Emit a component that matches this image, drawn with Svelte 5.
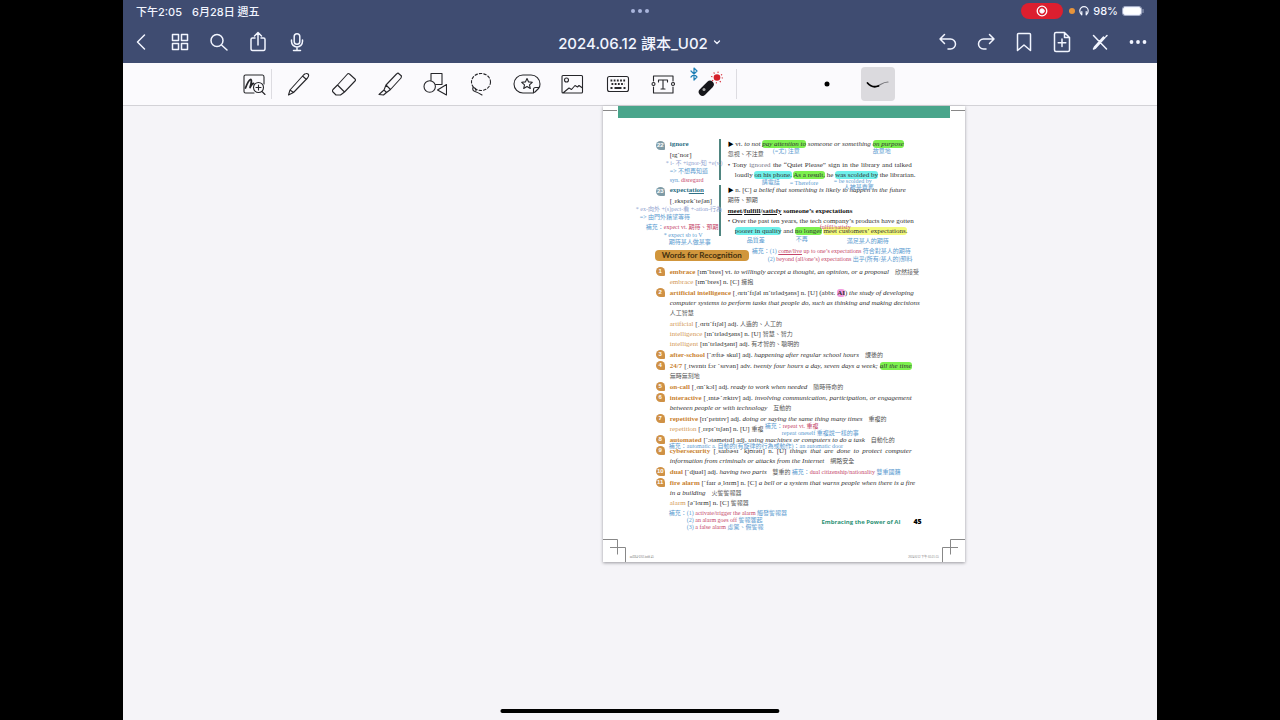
<script>
  const navLeft = [
    { label: "Back", d: "M15.5 5 8.5 12l7 7" },
    { label: "Thumbnails", d: "M4.5 4.5h6v6h-6zM13.5 4.5h6v6h-6zM4.5 13.5h6v6h-6zM13.5 13.5h6v6h-6z" },
    { label: "Search", d: "M4 10.500a6 6 0 1 0 12 0a6 6 0 1 0-12 0M14.500 15l5.500 5" },
    { label: "Share", d: "M9 8H6.500Q5 8 5 9.500v9Q5 20.500 6.500 20.500h11Q19 20.500 19 18.500v-9Q19 8 17.500 8H15M12 15V2.500M8.500 6 12 2.500 15.500 6" },
    { label: "Record audio", d: "M9.200 6.500a2.800 2.800 0 0 1 5.600 0v5a2.800 2.800 0 0 1-5.600 0zM6.500 10v1.500a5.500 5.500 0 0 0 11 0V10M12 17v3.500M8.500 20.500h7" },
  ];
  const navRight = [
    { label: "Undo", d: "M8.500 4.500 4 9l4.500 4.500M4 9h10.500a5 5 0 0 1 0 10H12" },
    { label: "Redo", d: "M15.500 4.500 20 9l-4.500 4.500M20 9H9.500a5 5 0 0 0 0 10H12" },
    { label: "Bookmark", d: "M5.500 4.500Q5.500 3.500 6.500 3.500h11Q18.500 3.500 18.500 4.500v16L12 15l-6.500 5.500z" },
    { label: "Add page", d: "M14.500 2.500H6Q4.500 2.500 4.500 4v16Q4.500 21.500 6 21.500h12Q19.500 21.500 19.500 20V7.500zM14.500 2.500v5h5M12 9v7.500M8.200 12.700h7.600" },
    { label: "Read only", d: "M5.500 5.500 18.500 19M5.500 19l2-1 9.500-10.500M18 6.500l1-1M5.500 19l1-2 9-10" },
    { label: "More", dots: true },
  ];
  const tools = [
    { label: "Pen", d: "M1.500 23l1.500-5L16.500 3q3-2.500 4.500-1t-.500 4L6.500 20.500zM15.500 4l4 3.500M11.500 8.500l6-6.500M3 18l3.500 2.500" },
    { label: "Eraser", d: "M5.500 13 15.500 2Q16.500 1 17.500 2l5.500 5Q24 8 23 9L12.500 20zM5.500 13 1 17.500q-1 1.500 0 2.500l3 3h4.500L12.500 20" },
    { label: "Highlighter", d: "M8 13 18.500 2 20 1l3.500 3-.500 2L12.500 17.500zM8 13l-2 5 2.500 2.500 4-3M6 18l-5 4.500 4.500.500 3-2.500" },
    { label: "Shapes", d: "M8 9V1.500h11v11h-6M1 14.500a5.700 5.700 0 1 0 11.400 0a5.700 5.700 0 1 0-11.400 0M23.500 12.500v10.500L14.500 18z" },
    { label: "Lasso", lasso: true },
    { label: "Elements", wide: true, d: "M10 3h8a9 9 0 0 1 9 9q0 3-1.500 4.500L22 20q-1.500 1-4 1h-8a9 9 0 0 1 0-18M26 15.500h-3.500q-2 0-2 2v3.500M14 6.500l1.600 3.400 3.700.400-2.800 2.500.800 3.700-3.300-1.900-3.300 1.900.800-3.700-2.800-2.500 3.700-.400z" },
    { label: "Image", d: "M2 4.500Q2 3.500 3 3.500h18.500Q22.500 3.500 22.500 4.500v15.500Q22.500 21 21.500 21H3Q2 21 2 20zM4.500 8a2 2 0 1 0 4 0a2 2 0 1 0-4 0M3 21l6-5 2.500 1.500 3.500-4 2.500 1.500 1.500-1.500 3.500 2.500" },
    { label: "Keyboard", keyboard: true },
    { label: "Text", d: "M2.500 9V4h19.500v5M2.500 15v6h19.500v-6M7.500 10V8h9v2M12 8v9M10 17h4M1 12a1.500 1.500 0 1 0 3 0a1.500 1.500 0 1 0-3 0M20.500 12a1.500 1.500 0 1 0 3 0a1.500 1.500 0 1 0-3 0" },
    { label: "Laser pointer", laser: true },
  ];

  // each line is a list of [text, classes] runs; full lines are justified
  const words = [
    {
      no: 22, word: [["ignore", ""]], ipa: "[ɪgˋnor]",
      lines: [
        { runs: [["▶ ", "tri"], ["vt. ", ""], ["to not ", "i"], ["pay attention to", "i green"], [" someone or something ", "i"], ["on purpose", "i green"]] },
        { zh: true, runs: [["忽視、不注意", "zh"]] },
        { full: true, runs: [["• Tony ", ""], ["ignored", "dim"], [" the “Quiet Please” sign in the library and talked", ""]] },
        { indent: true, full: true, runs: [["loudly ", ""], ["on his phone.", "cyan"], [" ", ""], ["As a result,", "green"], [" he ", ""], ["was scolded by", "cyan"], [" the librarian.", ""]] },
      ],
    },
    {
      no: 23, word: [["expect", ""], ["ation", "u"]], ipa: "[͵ɛkspɛkˋteʃən]",
      lines: [
        { runs: [["▶ ", "tri"], ["n. [C] ", ""], ["a belief that something is likely to happen in the future", "i"]] },
        { zh: true, runs: [["期待、預期", "zh"]] },
        { runs: [["meet", "b u"], ["/", "b"], ["fulfill", "b u"], ["/", "b"], ["satisfy", "b u"], [" someone’s expectations", "b"]] },
        { full: true, runs: [["• Over the past ten years, the tech company’s products have gotten", ""]] },
        { indent: true, runs: [["poorer in quality", "cyan"], [" and ", ""], ["no longer", "green"], [" ", ""], ["meet customers’ expectations.", "yellow"]] },
      ],
    },
  ];

  const entries = [
    {
      lines: [{ runs: [["embrace", "w"], [" [ɪmˋbres] vt. ", ""], ["to willingly accept a thought, an opinion, or a proposal", "i"], ["　欣然接受", "zh"]] }],
      sub: [[["embrace", "s"], [" [ɪmˋbres] n. [C] ", ""], ["擁抱", "zh"]]],
    },
    {
      lines: [
        { full: true, runs: [["artificial intelligence", "w"], [" [͵ɑrtɪˋfɪʃəl ɪnˋtɛlədʒəns] n. [U] (abbr. ", ""], ["AI", "pink"], [") ", ""], ["the study of developing", "i"]] },
        { full: true, runs: [["computer systems to perform tasks that people do, such as thinking and making decisions", "i"]] },
        { zh: true, runs: [["人工智慧", "zh"]] },
      ],
      sub: [
        [["artificial", "s"], [" [͵ɑrtɪˋfɪʃəl] adj. ", ""], ["人造的、人工的", "zh"]],
        [["intelligence", "s"], [" [ɪnˋtɛlədʒəns] n. [U] ", ""], ["智慧、智力", "zh"]],
        [["intelligent", "s"], [" [ɪnˋtɛlədʒənt] adj. ", ""], ["有才智的、聰明的", "zh"]],
      ],
    },
    { lines: [{ runs: [["after-school", "w"], [" [ˋæftɚ skul] adj. ", ""], ["happening after regular school hours", "i"], ["　課後的", "zh"]] }] },
    {
      lines: [
        { full: true, runs: [["24/7", "w"], [" [͵twɛntɪ fɔr ˋsɛvən] adv. ", ""], ["twenty four hours a day, seven days a week; ", "i"], ["all the time", "i green"]] },
        { runs: [["無時無刻地", "zh"]] },
      ],
    },
    { lines: [{ runs: [["on-call", "w"], [" [͵ɑnˋkɔl] adj. ", ""], ["ready to work when needed", "i"], ["　隨時待命的", "zh"]] }] },
    {
      lines: [
        { full: true, runs: [["interactive", "w"], [" [͵ɪntɚˋæktɪv] adj. ", ""], ["involving communication, participation, or engagement", "i"]] },
        { runs: [["between people or with technology", "i"], ["　互動的", "zh"]] },
      ],
    },
    {
      lines: [{ runs: [["repetitive", "w"], [" [rɪˋpɛtɪtɪv] adj. ", ""], ["doing or saying the same thing many times", "i"], ["　重複的", "zh"]] }],
      sub: [[["repetition", "s"], [" [͵rɛpɪˋtɪʃən] n. [U] ", ""], ["重複", "zh"]]],
    },
    { lines: [{ runs: [["automated", "w"], [" [ˋɔtəmetɪd] adj. ", ""], ["using machines or computers to do a task", "i"], ["　自動化的", "zh"]] }] },
    {
      lines: [
        { full: true, runs: [["cybersecurity", "w"], [" [͵saɪbɚsɪˋkjʊrətɪ] n. [U] ", ""], ["things that are done to protect computer", "i"]] },
        { runs: [["information from criminals or attacks from the Internet", "i"], ["　網路安全", "zh"]] },
      ],
    },
    { lines: [{ runs: [["dual", "w"], [" [ˋdjuəl] adj. ", ""], ["having two parts", "i"], ["　雙重的", "zh"]] }] },
    {
      lines: [
        { full: true, runs: [["fire alarm", "w"], [" [ˋfaɪr ə͵lɑrm] n. [C] ", ""], ["a bell or a system that warns people when there is a fire", "i"]] },
        { runs: [["in a building", "i"], ["　火警警報器", "zh"]] },
      ],
      sub: [[["alarm", "s"], [" [əˋlɑrm] n. [C] ", ""], ["警報器", "zh"]]],
    },
  ];

  // handwritten notes pinned on the page: x, y from its top left corner
  const notes = [
    { x: 170, y: 41, runs: [["(=尤) 注意", ""]] },
    { x: 270, y: 41, runs: [["故意地", ""]] },
    { x: 63, y: 53, runs: [["* i- 不 +ignor-知 +e(v.)", "faint"]] },
    { x: 67, y: 61, runs: [["=> 不想再知道", ""]] },
    { x: 67, y: 70, runs: [["syn. ", ""], ["disregard", "red"]] },
    { x: 159, y: 72, runs: [["講電話", ""]] },
    { x: 187, y: 73, runs: [["= Therefore", ""]] },
    { x: 231, y: 71, runs: [["= be scolded by", ""]] },
    { x: 241, y: 77, runs: [["人被某責罵", ""]] },
    { x: 33, y: 99, runs: [["* ex-向外 +(s)pect-看 +-ation-行為", "faint"]] },
    { x: 37, y: 107, runs: [["=> 由門外藉望等待", ""]] },
    { x: 43, y: 117, runs: [["補充：", ""], ["expect vt. 期待、預期", "red"]] },
    { x: 61, y: 125, runs: [["* expect sb to V", ""]] },
    { x: 66, y: 132, runs: [["期待某人做某事", ""]] },
    { x: 217, y: 117, runs: [["fulfill/satisfy", "red"]] },
    { x: 144, y: 130, runs: [["品質差", ""]] },
    { x: 193, y: 129, runs: [["不再", ""]] },
    { x: 244, y: 131, runs: [["滿足某人的期待", ""]] },
    { x: 149, y: 141, runs: [["補充：(1) ", ""], ["come/live", "red u"], [" up to one’s expectations ", "red"], ["符合對某人的期待", ""]] },
    { x: 165, y: 149, runs: [["(2) ", ""], ["beyond (all/one’s) expectations ", "red"], ["出乎(所有/某人的)預料", ""]] },
    { x: 162, y: 316, runs: [["補充：", ""], ["repeat vt. 重複", "red"]] },
    { x: 179, y: 323, runs: [["repeat oneself 重複說一樣的事", ""]] },
    { x: 66, y: 336, runs: [["補充：automatic a. 自動的(有旋律的行為或動作)：an automatic door", ""]] },
    { x: 189, y: 362, runs: [["補充：", ""], ["dual citizenship/nationality ", "red"], ["雙重國籍", ""]] },
    { x: 66, y: 403, runs: [["補充：(1) ", ""], ["activate/trigger the alarm ", "red"], ["觸發警報器", ""]] },
    { x: 84, y: 410, runs: [["(2) ", ""], ["an alarm goes off ", "red"], ["警報響起", ""]] },
    { x: 84, y: 417, runs: [["(3) ", ""], ["a false alarm ", "red"], ["虛驚、假警報", ""]] },
  ];

  let pen = $state("curve");
</script>

{#snippet text(runs)}{#each runs as [t, c]}<span class={c}>{t}</span>{/each}{/snippet}

{#snippet navButton(item)}
  <button type="button" class="nav-btn" aria-label={item.label}>
    <svg viewBox="0 0 24 24">
      {#if item.dots}
        <g fill="currentColor" stroke="none"><circle cx="5.500" cy="12" r="1.900" /><circle cx="12" cy="12" r="1.900" /><circle cx="18.500" cy="12" r="1.900" /></g>
      {:else}
        <path d={item.d} />
      {/if}
    </svg>
  </button>
{/snippet}

<div class="device">
  <header>
    <div class="status">
      <span class="clock"><span>下午2:05</span><span>6月28日 週五</span></span>
      <span class="grip"><i></i><i></i><i></i></span>
      <span class="system">
        <span class="rec">
          <svg viewBox="0 0 12 12"><circle cx="6" cy="6" r="4.800" fill="none" stroke="#fff" stroke-width="1.300" /><circle cx="6" cy="6" r="2.200" fill="#fff" /></svg>
        </span>
        <i class="mic-dot"></i>
        <svg class="phones" viewBox="0 0 10 10"><path d="M2.500 8.500Q.800 7 .800 4.800a4.200 4.200 0 0 1 8.400 0Q9.200 7 7.500 8.500M2.800 5.500v3.300M7.200 5.500v3.300" /></svg>
        <span>98%</span>
        <svg class="battery" viewBox="0 0 22 10"><rect x=".500" y=".500" width="19" height="9" rx="2.500" fill="none" stroke="#a3abc4" /><rect x="1.500" y="1.500" width="17" height="7" rx="1.500" fill="#fff" /><path d="M21 3.500v3" stroke="#a3abc4" /></svg>
      </span>
    </div>
    <nav>
      <div class="group">
        {#each navLeft as item}{@render navButton(item)}{/each}
      </div>
      <button type="button" class="title">
        2024.06.12 課本_U02
        <svg viewBox="0 0 8 8"><path d="M1.500 3 4 5.500 6.500 3" /></svg>
      </button>
      <div class="group right">
        {#each navRight as item}{@render navButton(item)}{/each}
      </div>
    </nav>
  </header>

  <div class="toolbar" role="toolbar" aria-label="Tools">
    <button type="button" class="tool" aria-label="Zoom window">
      <svg viewBox="0 0 24 24">
        <path d="M22 12V5Q22 3 20.500 3H3.500Q2 3 2 4.500v15Q2 21 3.500 21H12" />
        <path d="M3.500 16q3-8 5-8.500 2 0-.500 8 2-4 3.500-4" stroke-width="1.800" />
        <path d="M11.500 15.500a5 5 0 1 0 10 0a5 5 0 1 0-10 0M20 19.500l3 3M16.500 13v5M14 15.500h5" />
      </svg>
    </button>
    <span class="divider"></span>
    <div class="tools">
      {#each tools as tool}
        <button type="button" class="tool" aria-label={tool.label}>
          {#if tool.laser}
            <svg class="laser" viewBox="0 0 34 34">
              <path d="M-1 4l6 6-3 3V1l3 3-6 6" stroke="#1f7fb5" stroke-width="1.200" />
              <path d="M10.500 25 18 17.500" stroke="#16161a" stroke-width="7.500" />
              <circle cx="12" cy="22.500" r="1.500" fill="#aaa" stroke="none" />
              <circle cx="25" cy="10.500" r="3.300" fill="#d5202b" stroke="none" />
              <circle cx="25" cy="10.500" r="5.300" fill="none" stroke="#d5202b" stroke-width="1.300" stroke-dasharray="1 3.160" stroke-linecap="butt" />
            </svg>
          {:else if tool.wide}
            <svg class="wide" viewBox="0 0 28 24"><path d={tool.d} /></svg>
          {:else}
            <svg viewBox="0 0 24 24">
              {#if tool.lasso}
                <ellipse cx="12" cy="10" rx="9.500" ry="8.500" stroke-dasharray="2.500 2" />
                <path d="M4 15.500q-1 3 2 4t7 3.500M4 15.500q3 0 3 3" />
              {:else if tool.keyboard}
                <rect x="1.500" y="4.500" width="21" height="15" rx="2" />
                <path d="M4.500 8.500h15M5.500 12h13" stroke-width="2.200" stroke-dasharray="1.800 1.400" stroke-linecap="butt" />
                <path d="M4.500 16h2M8.500 16h7M17.500 16h2" stroke-width="2" stroke-linecap="butt" />
              {:else}
                <path d={tool.d} />
              {/if}
            </svg>
          {/if}
        </button>
      {/each}
    </div>
    <span class="divider"></span>
    <div class="pens">
      <button type="button" class="tool" class:selected={pen === "dot"} aria-label="Dot" onclick={() => (pen = "dot")}>
        <svg viewBox="0 0 24 24"><circle cx="12" cy="12" r="2.500" fill="#000" stroke="none" /></svg>
      </button>
      <button type="button" class="tool" class:selected={pen === "curve"} aria-label="Curve" onclick={() => (pen = "curve")}>
        <svg viewBox="0 0 24 24">
          <path d="M10 14.500c4-.500 6-4.500 12-4.500" stroke="#77777b" stroke-width="1.200" />
          <path d="M1.500 11c3 3.500 7 4.500 11 3" stroke="#000" stroke-width="1.800" />
        </svg>
      </button>
    </div>
  </div>

  <main>
    <article>
      <svg class="marks top-left" viewBox="0 0 24 24"><path d="M0 4.500h14" /></svg>
      <svg class="marks top-right" viewBox="0 0 24 24"><path d="M10 4.500h14" /></svg>
      <div class="band"></div>

      {#each words as w}
        <section class="word">
          <span class="no grey">{w.no}</span>
          <div>
            <h3>{@render text(w.word)}</h3>
            <p class="ipa">{w.ipa}</p>
          </div>
          <div class="meaning">
            {#each w.lines as line}
              <p class:full={line.full} class:zh-line={line.zh} class:indent={line.indent}>{@render text(line.runs)}</p>
            {/each}
          </div>
        </section>
      {/each}

      <h2>Words for Recognition</h2>

      <ol>
        {#each entries as entry, i}
          <li class="entry">
            <span class="no">{i + 1}</span>
            <div>
              {#each entry.lines as line}
                <p class:full={line.full} class:zh-line={line.zh}>{@render text(line.runs)}</p>
              {/each}
              {#each entry.sub ?? [] as runs}
                <p>{@render text(runs)}</p>
              {/each}
            </div>
          </li>
        {/each}
      </ol>

      <footer><span>Embracing the Power of AI</span><b>45</b></footer>
      <div class="slug"><span>aaEB4-U02.indd  45</span><span>2024/6/12  下午 03:21:55</span></div>

      {#each notes as note}
        <span class="note" style="left: {note.x}px; top: {note.y}px">{@render text(note.runs)}</span>
      {/each}

      <svg class="marks bottom-left" viewBox="0 0 24 24"><path d="M0 1.500h14.500v15M7 9.500h15.500V24" /></svg>
      <svg class="marks bottom-right" viewBox="0 0 24 24"><path d="M24 1.500H9.500v15M17 9.500H1.500V24" /></svg>
    </article>
    <div class="home"></div>
  </main>
</div>

<style>
  :global(body) {
    background: #000;
  }
  .device {
    height: 100vh;
    aspect-ratio: 1034 / 720;
    max-width: 100%;
    margin: 0 auto;
    display: flex;
    flex-direction: column;
    overflow: hidden;
    font-family: Inter, "Noto Sans CJK TC", sans-serif;
    background: #f5f4f8;
  }
  button {
    border: 0;
    padding: 0;
    background: none;
    color: inherit;
    font: inherit;
    cursor: pointer;
  }
  svg {
    fill: none;
    stroke: currentColor;
    stroke-linecap: round;
    stroke-linejoin: round;
    display: block;
  }
  h2, h3, p, ol {
    margin: 0;
    padding: 0;
    font-weight: inherit;
    font-size: inherit;
  }
  header {
    background: #3f4c71;
    color: #f2f5ff;
    flex: none;
  }
  .status {
    display: grid;
    grid-template-columns: 1fr auto 1fr;
    align-items: center;
    height: 21px;
    padding: 0 13px;
    font-size: 11px;
    font-weight: 500;
  }
  .clock {
    display: flex;
    gap: 10px;
  }
  .grip {
    display: flex;
    gap: 3px;
  }
  .grip i {
    width: 4px;
    height: 4px;
    border-radius: 50%;
    background: #a9b5dc;
  }
  .system {
    display: flex;
    justify-content: flex-end;
    align-items: center;
    gap: 4px;
  }
  .rec {
    display: flex;
    align-items: center;
    justify-content: center;
    width: 42px;
    height: 16px;
    margin-right: 2px;
    border-radius: 8px;
    background: #dc1f2f;
  }
  .rec svg {
    width: 12px;
  }
  .mic-dot {
    width: 6px;
    height: 6px;
    border-radius: 50%;
    background: #e8943a;
  }
  .phones {
    width: 10px;
    stroke-width: 1.2;
  }
  .battery {
    width: 22px;
  }
  nav {
    display: grid;
    grid-template-columns: 1fr auto 1fr;
    align-items: center;
    height: 42px;
    padding: 0 4px 0 3px;
  }
  .group {
    display: flex;
    gap: 9px;
  }
  .group.right {
    justify-content: flex-end;
    gap: 8px;
  }
  .nav-btn {
    display: flex;
    align-items: center;
    justify-content: center;
    width: 30px;
    height: 30px;
  }
  .nav-btn svg {
    width: 24px;
    stroke-width: 1.5;
  }
  .title {
    display: flex;
    align-items: center;
    gap: 5px;
    font-size: 15px;
    font-weight: 500;
    white-space: nowrap;
  }
  .title svg {
    width: 8px;
    stroke-width: 1.3;
  }
  .toolbar {
    display: flex;
    align-items: center;
    flex: none;
    height: 42px;
    padding-left: 11%;
    background: #fbfafd;
    border-bottom: 1px solid #d3d2d7;
    color: #26262a;
  }
  .tool {
    display: flex;
    align-items: center;
    justify-content: center;
    flex: none;
    width: 34px;
    height: 34px;
    border-radius: 4px;
  }
  .tool svg {
    width: 24px;
    flex: none;
    stroke-width: 1.1;
  }
  .tool .wide {
    width: 28px;
  }
  .tool .laser {
    width: 34px;
    overflow: visible;
  }
  .tool.selected {
    background: #dbdade;
  }
  .divider {
    flex: none;
    width: 1px;
    height: 30px;
    background: #dddce1;
  }
  .tools {
    display: flex;
    flex: none;
    justify-content: space-between;
    box-sizing: border-box;
    width: 50%;
    margin-right: 4px;
    padding: 0 6px 0 10px;
  }
  .pens {
    display: flex;
    gap: 17px;
    margin-left: 73px;
  }
  main {
    position: relative;
    flex: 1;
  }
  article {
    position: relative;
    width: 35%;
    margin-left: 46.4%;
    box-sizing: border-box;
    background: #fff;
    box-shadow: 0 1px 3px #9a999f;
    color: #333;
    font-family: "Liberation Serif", "Noto Sans CJK TC", serif;
    font-size: 7px;
    line-height: 10px;
    white-space: nowrap;
  }
  .band {
    height: 12px;
    margin: 0 15px 21px;
    background: #49a58b;
  }
  .word {
    display: grid;
    grid-template-columns: 14px 49px minmax(0, 1fr);
    margin: 0 53px 5px;
  }
  .word h3 {
    color: #2f7186;
    font-weight: bold;
    line-height: 11px;
  }
  .meaning {
    border-left: 2px solid #4f8580;
    padding-left: 7px;
  }
  p {
    height: 10px;
  }
  .zh-line {
    height: 11px;
    line-height: 11px;
  }
  .full {
    text-align-last: justify;
  }
  .indent {
    padding-left: 7px;
  }
  .no {
    width: 9px;
    height: 9px;
    border-radius: 5px 5px 1px 5px;
    background: #cf9145;
    color: #fff;
    font: bold 6px/9px "Liberation Sans", sans-serif;
    text-align: center;
  }
  .no.grey {
    margin-top: 2px;
    background: #7f9ba6;
  }
  h2 {
    width: max-content;
    margin: 14px 0 6px 52px;
    padding: 0 7px;
    border-radius: 4px;
    background: #d1963c;
    color: #43300f;
    font: bold 8px/11px Lato, sans-serif;
  }
  ol {
    list-style: none;
    margin: 0 53px;
  }
  .entry {
    display: grid;
    grid-template-columns: 14px minmax(0, 1fr);
    margin-bottom: 1px;
  }
  .i {
    font-style: italic;
  }
  .b {
    font-weight: bold;
    color: #111;
  }
  .u {
    text-decoration: underline;
  }
  .w {
    color: #c9822f;
    font-weight: bold;
  }
  .s {
    color: #d39a58;
  }
  .dim {
    color: #778;
  }
  .zh {
    font-size: 6px;
    color: #555;
  }
  .tri {
    font-size: 6px;
    color: #000;
  }
  .green, .cyan, .yellow, .pink {
    border-radius: 3px;
  }
  .green {
    background: #7df04f;
  }
  .cyan {
    background: #6ff0ea;
  }
  .yellow {
    background: #f3fa7c;
  }
  .pink {
    background: #f29be0;
    font-weight: bold;
  }
  footer {
    display: flex;
    justify-content: flex-end;
    gap: 13px;
    margin: 9px 43px 0 0;
    color: #2f9377;
    font: bold 6px/10px "Open Sans", sans-serif;
  }
  footer b {
    color: #000;
    font-size: 7px;
  }
  .slug {
    display: flex;
    justify-content: space-between;
    padding: 26px 26px 0 27px;
    color: #777;
    font-size: 3px;
    line-height: 9px;
  }
  .note {
    position: absolute;
    color: #5b9bd0;
    font-size: 6px;
    line-height: 8px;
  }
  .faint {
    color: #92a3cf;
  }
  .red {
    color: #c5466a;
  }
  .marks {
    position: absolute;
    width: 24px;
    stroke: #888;
    stroke-linecap: butt;
  }
  .top-left {
    top: 0;
    left: 0;
  }
  .top-right {
    top: 0;
    right: 0;
  }
  .bottom-left {
    bottom: 0;
    left: 0;
  }
  .bottom-right {
    bottom: 0;
    right: 0;
  }
  .home {
    position: absolute;
    bottom: 7px;
    left: 50%;
    width: 27%;
    height: 4px;
    transform: translateX(-50%);
    border-radius: 2px;
    background: #000;
  }
</style>
